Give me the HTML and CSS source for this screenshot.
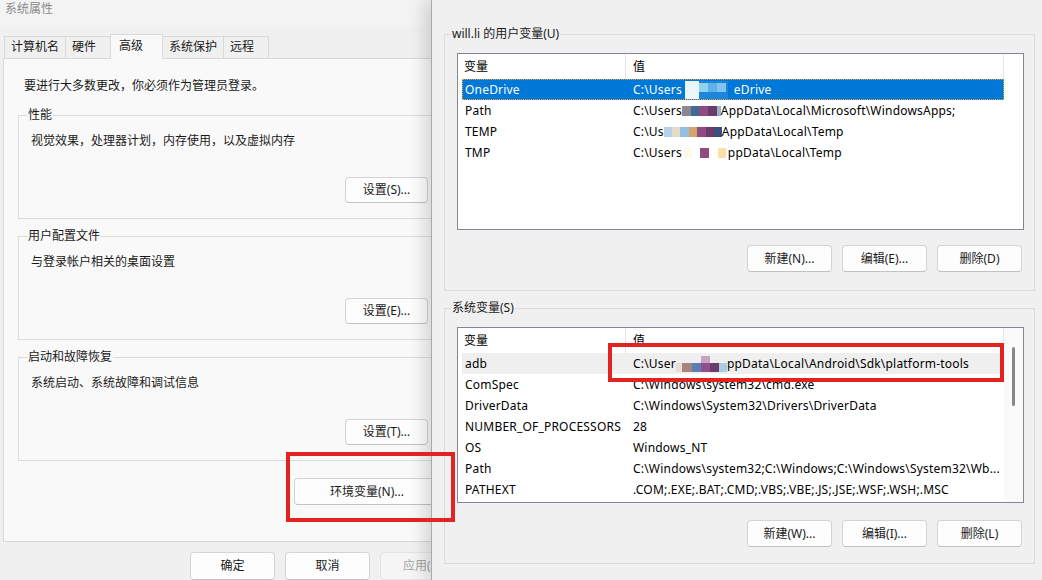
FILE: index.html
```html
<!DOCTYPE html>
<html lang="zh-CN">
<head>
  <meta charset="UTF-8"/>
  <title>系统属性 - 环境变量</title>
  <link rel="stylesheet" href="styles.css">
</head>
<body>
  <div class="desktop">

    <!-- system properties dialog (partly covered) -->
    <div class="sysprops">
      <div class="titlebar">系统属性</div>

      <div class="tabs">
        <div class="tab">计算机名</div>
        <div class="tab">硬件</div>
        <div class="tab active">高级</div>
        <div class="tab">系统保护</div>
        <div class="tab">远程</div>
      </div>

      <div class="panel">
        <p class="note">要进行大多数更改，你必须作为管理员登录。</p>

        <fieldset class="group">
          <legend>性能</legend>
          <p>视觉效果，处理器计划，内存使用，以及虚拟内存</p>
          <div class="actions"><button class="btn">设置(S)...</button></div>
        </fieldset>

        <fieldset class="group">
          <legend>用户配置文件</legend>
          <p>与登录帐户相关的桌面设置</p>
          <div class="actions"><button class="btn">设置(E)...</button></div>
        </fieldset>

        <fieldset class="group">
          <legend>启动和故障恢复</legend>
          <p>系统启动、系统故障和调试信息</p>
          <div class="actions"><button class="btn">设置(T)...</button></div>
        </fieldset>

        <div class="env-row"><button class="btn env-btn">环境变量(N)...</button></div>
      </div>

      <div class="dialog-buttons">
        <button class="btn">确定</button>
        <button class="btn">取消</button>
        <button class="btn" disabled>应用(A)</button>
      </div>
    </div>

    <!-- environment variables dialog -->
    <div class="envvars">
      <fieldset class="vars">
        <legend>will.li 的用户变量(U)</legend>
        <div class="listview">
          <div class="lv-main">
            <div class="lv-head"><span>变量</span><span>值</span></div>
            <div class="lv-row selected"><span>OneDrive</span><span>C:\Users<i class="blur b-onedrive"></i>eDrive</span></div>
            <div class="lv-row"><span>Path</span><span>C:\Users<i class="blur b-path"></i>AppData\Local\Microsoft\WindowsApps;</span></div>
            <div class="lv-row"><span>TEMP</span><span>C:\Us<i class="blur b-temp"></i>AppData\Local\Temp</span></div>
            <div class="lv-row"><span>TMP</span><span>C:\Users<i class="blur b-tmp"></i>ppData\Local\Temp</span></div>
          </div>
        </div>
        <div class="btn-row">
          <button class="btn">新建(N)...</button>
          <button class="btn">编辑(E)...</button>
          <button class="btn">删除(D)</button>
        </div>
      </fieldset>

      <fieldset class="vars">
        <legend>系统变量(S)</legend>
        <div class="listview">
          <div class="lv-main">
            <div class="lv-head"><span>变量</span><span>值</span></div>
            <div class="lv-row hover"><span>adb</span><span>C:\User<i class="blur b-adb"></i>ppData\Local\Android\Sdk\platform-tools</span></div>
            <div class="lv-row"><span>ComSpec</span><span>C:\Windows\system32\cmd.exe</span></div>
            <div class="lv-row"><span>DriverData</span><span>C:\Windows\System32\Drivers\DriverData</span></div>
            <div class="lv-row"><span>NUMBER_OF_PROCESSORS</span><span>28</span></div>
            <div class="lv-row"><span>OS</span><span>Windows_NT</span></div>
            <div class="lv-row"><span>Path</span><span>C:\Windows\system32;C:\Windows;C:\Windows\System32\Wb...</span></div>
            <div class="lv-row"><span>PATHEXT</span><span>.COM;.EXE;.BAT;.CMD;.VBS;.VBE;.JS;.JSE;.WSF;.WSH;.MSC</span></div>
          </div>
          <div class="scrollbar"><div class="thumb"></div></div>
        </div>
        <div class="btn-row">
          <button class="btn">新建(W)...</button>
          <button class="btn">编辑(I)...</button>
          <button class="btn">删除(L)</button>
        </div>
      </fieldset>
    </div>

    <!-- red annotation boxes -->
    <div class="mark mark-env"></div>
    <div class="mark mark-adb"></div>
  </div>
</body>
</html>
```

FILE: styles.css
```css
* {
  box-sizing: border-box;
}

body {
  margin: 0;
  font-family: "Noto Sans", "Noto Sans CJK SC", sans-serif;
  font-size: 12px;
  line-height: 16px;
  color: #1a1a1a;
  background: #f0f0f0;
}

.desktop {
  position: relative;
  display: flex;
  width: 1042px;
  height: 580px;
  overflow: hidden;
}

/* ---------- system properties ---------- */

.sysprops {
  flex: none;
  width: 431px;
  overflow: hidden;
  background: #f0f0f0;
}

.titlebar {
  height: 25px;
  padding: 1px 0 0 5px;
  color: #8a8a8a;
  background: #f3f3f3;
}

.tabs {
  display: flex;
  align-items: flex-end;
  height: 24px;
  margin: 9px 0 0 4px;
}

.tab {
  height: 22px;
  min-width: 46px;
  padding: 2px 6px 0;
  border: 1px solid #dadada;
  border-bottom: none;
  margin-right: -1px;
  background: #f0f0f0;
}

.tab.active {
  position: relative;
  z-index: 1;
  height: 25px;
  min-width: 53px;
  margin-bottom: -1px;
  padding: 3px 8px 0;
  background: #f9f9f9;
}

.panel {
  width: 470px;
  margin-left: 3px;
  padding: 19px 0 36px 14px;
  border: 1px solid #d9d9d9;
  background: #f9f9f9;
}

.panel p {
  margin: 0;
}

.note {
  margin-left: 6px !important;
}

.group {
  width: 422px;
  margin: 9px 0 0;
  padding: 10px 11px 15px 8px;
  border: 1px solid #dcdcdc;
  min-width: 0;
}

.note + .group {
  margin-top: 13px;
}

.group legend {
  padding: 0 1px;
}

.group p {
  margin-left: 4px !important;
}

.actions {
  margin-top: 28px;
  text-align: right;
  line-height: 0;
}

.btn {
  height: 26px;
  width: 83px;
  padding: 0;
  font: inherit;
  line-height: 16px;
  color: #1a1a1a;
  background: #fdfdfd;
  border: 1px solid #d3d3d3;
  border-bottom-color: #c2c2c2;
  border-radius: 4px;
}

.btn:disabled {
  color: #a3a3a3;
  background: #f5f5f5;
  border-color: #e3e3e3;
}

.env-row {
  width: 422px;
  margin-top: 17px;
  text-align: right;
  line-height: 0;
}

.env-btn {
  width: 146px;
  height: 27px;
}

.dialog-buttons {
  display: flex;
  gap: 10px;
  padding: 10px 0 0 190px;
}

.dialog-buttons .btn {
  flex: none;
  width: 85px;
  height: 28px;
}

/* ---------- environment variables ---------- */

.envvars {
  flex: 1;
  position: relative;
  background: #f0f0f0;
  border-left: 1px solid #a9a9a9;
  box-shadow: -7px 0 15px rgba(0, 0, 0, 0.14);
  padding: 0 7px 0 12px;
}

.vars {
  margin: 9px 0 0;
  padding: 11px 10px 18px 12px;
  border: 1px solid #dcdcdc;
  min-width: 0;
}

.vars:first-child {
  margin-top: 26px;
}

.vars + .vars {
  padding-bottom: 16px;
}

.vars legend {
  margin-left: -6px;
  padding: 0 1px;
}

.listview {
  display: flex;
  height: 177px;
  border: 1px solid #838791;
  background: #fff;
  color: #000;
}

.vars + .vars .listview {
  height: 176px;
}

.lv-main {
  width: 546px;
  flex: none;
}

.lv-head {
  display: grid;
  grid-template-columns: 168px 1fr;
  height: 25px;
  line-height: 25px;
}

.lv-head span {
  border-right: 1px solid #e5e5e5;
  padding-left: 6px;
}

.lv-head span + span {
  padding-left: 7px;
}

.lv-row {
  display: grid;
  grid-template-columns: 171px 1fr;
  height: 21px;
  margin-left: 4px;
  line-height: 21px;
  letter-spacing: 0.2px;
  white-space: nowrap;
  overflow: hidden;
}

.lv-row span:first-child {
  padding-left: 3px;
}

.lv-row.selected {
  background: #0078d7;
  color: #fff;
  outline: 1px dotted #f4a23a;
  outline-offset: -1px;
}

.lv-row.hover {
  background: #efefef;
}

.scrollbar {
  flex: 1;
  background: #fafafa;
}

.thumb {
  width: 3px;
  height: 59px;
  margin: 19px auto 0;
  border-radius: 2px;
  background: #878787;
}

.btn-row {
  display: flex;
  justify-content: flex-end;
  gap: 10px;
  margin-top: 15px;
  padding-right: 2px;
}

.vars + .vars .btn-row {
  margin-top: 17px;
}

.btn-row .btn {
  width: 85px;
  height: 27px;
}

/* pixelated blur over the user name */
.blur {
  display: inline-block;
  height: 10px;
  vertical-align: -1px;
}

.b-onedrive {
  width: 52px;
  height: 18px;
  vertical-align: -5px;
  background:
    linear-gradient(90deg, transparent 0 17px, #8ed3f2 17px 26px, #60b1e8 26px 35px, #80c4ef 35px 44px, transparent 44px) 0 2px / 100% 9px no-repeat,
    linear-gradient(90deg, transparent 0 3px, #eaf5fc 3px 17px, #1d86dc 17px 46px, transparent 46px);
}

.b-path {
  width: 39px;
  background: linear-gradient(90deg, #8c8690 0 9px, #3f6a98 9px 17px, #8f4b82 17px 26px, #6c3a6d 26px 35px, #93b7c2 35px);
}

.b-temp {
  width: 58px;
  background: linear-gradient(90deg, #b5d1e8 0 8px, #e5dcc5 8px 16px, #95bfe2 16px 25px, #d5a46a 25px 33px, #8f4b82 33px 42px, #6c3a6d 42px 50px, #3c4f7c 50px);
}

.b-tmp {
  width: 46px;
  background: linear-gradient(90deg, transparent 0 2px, #fdfbe6 2px 10px, transparent 10px 18px, #8f4b82 18px 27px, transparent 27px 36px, #fde0a8 36px 44px, transparent 44px);
}

.b-adb {
  width: 51px;
  height: 16px;
  vertical-align: -4px;
  background:
    linear-gradient(90deg, transparent 0 25px, #c6a4c4 25px 34px, transparent 34px) 0 0 / 100% 7px no-repeat,
    linear-gradient(90deg, #eaded3 0 6px, #a5847f 6px 16px, #5b7fb2 16px 25px, #8e4f8c 25px 34px, #6d3c6f 34px 43px, #a7cde3 43px) 0 7px / 100% 9px no-repeat;
}

/* ---------- annotations ---------- */

.mark {
  position: absolute;
  border: 4px solid #e32222;
}

.mark-env {
  left: 286px;
  top: 452px;
  width: 169px;
  height: 70px;
}

.mark-adb {
  left: 608px;
  top: 343px;
  width: 396px;
  height: 39px;
}
```
